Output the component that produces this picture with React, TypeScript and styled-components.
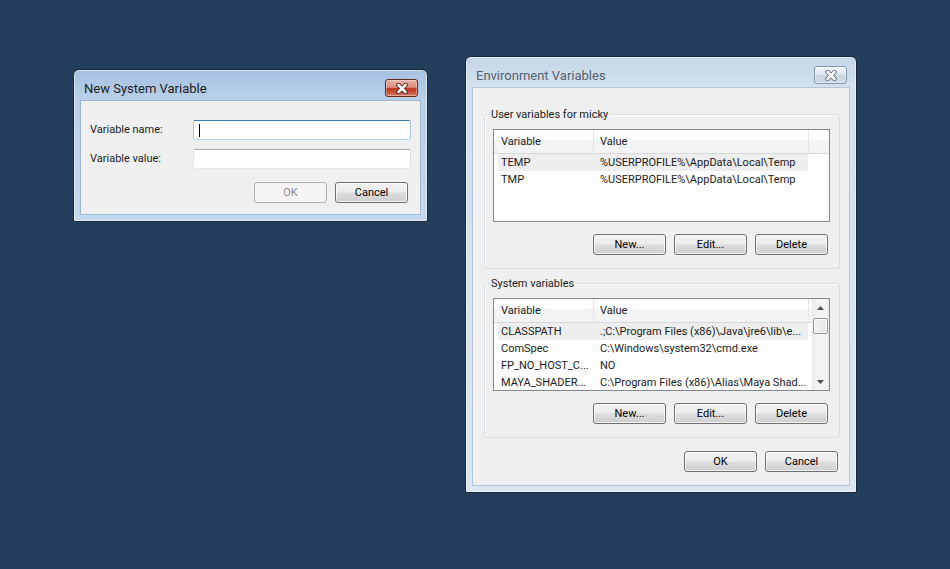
import React, { ReactElement } from 'react';
import styled, { createGlobalStyle } from 'styled-components';

interface WindowProps {
  $x: number;
  $y: number;
  $w: number;
  $h: number;
  $active?: boolean;
}

interface ActiveProps {
  $active?: boolean;
}

const GlobalStyle = createGlobalStyle`
  html, body {
    margin: 0;
    padding: 0;
  }
  body {
    background: #243f5c;
    font-family: Roboto, 'Noto Sans', sans-serif;
    font-size: 11px;
    color: #1b1b1b;
  }
`;

const Desktop = styled.div`
  position: relative;
  width: 950px;
  height: 569px;
  overflow: hidden;
  background: #243f5c;
`;

const Window = styled.div<WindowProps>`
  position: absolute;
  left: ${({ $x }) => $x}px;
  top: ${({ $y }) => $y}px;
  width: ${({ $w }) => $w}px;
  height: ${({ $h }) => $h}px;
  box-sizing: border-box;
  display: flex;
  flex-direction: column;
  padding: 0 6px 6px;
  border: 1px solid #1a2939;
  border-radius: 6px 6px 2px 2px;
  background: ${({ $active }) =>
    $active
      ? 'linear-gradient(180deg, #a6c1df 0px, #b8d0e9 28px, #c4d9ee 100%)'
      : 'linear-gradient(180deg, #c6d6e8 0px, #d2e0ef 28px, #dae6f2 100%)'};
  box-shadow: inset 0 0 0 1px rgba(255, 255, 255, 0.5);
`;

const TitleBar = styled.div`
  height: 30px;
  display: flex;
  align-items: flex-start;
  justify-content: space-between;
  padding: 0 3px 0 4px;
  flex-shrink: 0;
`;

const Title = styled.span<ActiveProps>`
  margin-top: 10px;
  font-size: 13px;
  line-height: 17px;
  color: ${({ $active }) => ($active ? '#1c1c1c' : '#55616d')};
`;

const CloseButton = styled.div<ActiveProps>`
  margin-top: 9px;
  width: 33px;
  height: 18px;
  box-sizing: border-box;
  border-radius: 3px;
  display: flex;
  align-items: center;
  justify-content: center;
  border: 1px solid ${({ $active }) => ($active ? '#6a2518' : '#8797ab')};
  background: ${({ $active }) =>
    $active
      ? 'linear-gradient(180deg, #eab3a8 0%, #db8b7c 46%, #c23a21 52%, #c84b33 75%, #dc846f 100%)'
      : 'linear-gradient(180deg, #eef3f8 0%, #dfe7f0 46%, #cbd7e4 52%, #cfdae6 100%)'};
  box-shadow: inset 0 0 0 1px rgba(255, 255, 255, 0.35);
`;

const Client = styled.div<ActiveProps>`
  flex: 1;
  box-sizing: border-box;
  display: flex;
  flex-direction: column;
  background: #f0f0f0;
  border: 1px solid ${({ $active }) => ($active ? '#9fb6cf' : '#b5c6d8')};
`;

const FormClient = styled(Client)`
  padding: 19px 9px 0 9px;
`;

const FormGrid = styled.div`
  display: grid;
  grid-template-columns: 103px 1fr;
  align-items: center;
  row-gap: 9px;
`;

const FieldLabel = styled.span`
  line-height: 20px;
`;

const TextBox = styled.div<{ $focused?: boolean }>`
  height: 20px;
  box-sizing: border-box;
  display: flex;
  align-items: center;
  padding-left: 5px;
  background: #fff;
  border: 1px solid;
  border-radius: 2px;
  border-color: ${({ $focused }) =>
    $focused
      ? '#3d7bad #a4c9e3 #b7d9ed #a4c9e3'
      : '#abadb3 #dbdfe6 #e3e9ef #e2e3ea'};
`;

const Caret = styled.span`
  width: 1px;
  height: 13px;
  background: #000;
`;

const ButtonRow = styled.div<{ $top: number; $right: number }>`
  display: flex;
  justify-content: flex-end;
  gap: 8px;
  margin-top: ${({ $top }) => $top}px;
  padding-right: ${({ $right }) => $right}px;
`;

const Button = styled.button`
  width: 73px;
  height: 21px;
  box-sizing: border-box;
  padding: 0;
  font-family: Roboto, 'Noto Sans', sans-serif;
  font-size: 11px;
  color: #000;
  border: 1px solid #707070;
  border-radius: 3px;
  background: linear-gradient(180deg, #f3f3f3 0%, #ececec 48%, #dddddd 52%, #cfcfcf 100%);
  box-shadow: inset 0 0 0 1px rgba(255, 255, 255, 0.75);

  &:disabled {
    color: #8a8a8a;
    border-color: #adb2b5;
    background: #f4f4f4;
    box-shadow: none;
  }
`;

const EnvClient = styled(Client)`
  padding: 26px 9px 0 11px;
`;

const GroupBox = styled.section<{ $gap?: number }>`
  position: relative;
  margin-top: ${({ $gap = 0 }) => $gap}px;
  padding: 14px 9px 13px 8px;
  border: 1px solid #d5dfe5;
  border-radius: 3px;
  box-shadow: inset 1px 1px 0 #fff;
`;

const GroupLabel = styled.span`
  position: absolute;
  top: -8px;
  left: 5px;
  padding: 0 1px;
  line-height: 15px;
  background: #f0f0f0;
  color: #1b1b1b;
`;

const ListView = styled.div`
  display: flex;
  height: 93px;
  box-sizing: border-box;
  border: 1px solid #828790;
  background: #fff;
  overflow: hidden;
`;

const ListBody = styled.div`
  flex: 1;
  min-width: 0;
`;

const HeaderRow = styled.div`
  display: grid;
  grid-template-columns: 100px 215px 1fr;
  height: 24px;
  box-sizing: border-box;
  border-bottom: 1px solid #d8d8d8;
  background: linear-gradient(180deg, #ffffff 0%, #ffffff 40%, #f4f5f7 45%, #f2f3f5 100%);
`;

const HeaderCell = styled.div<{ $pad: number; $last?: boolean }>`
  display: flex;
  align-items: center;
  padding-left: ${({ $pad }) => $pad}px;
  border-right: ${({ $last }) => ($last ? 'none' : '1px solid #e3e4e6')};
  color: #1b1b1b;
`;

const Row = styled.div<{ $selected?: boolean }>`
  display: grid;
  grid-template-columns: 96px 214px;
  margin-left: 4px;
  width: 310px;
  height: 17px;
  line-height: 17px;
  background: ${({ $selected }) => ($selected ? '#eeeeee' : 'transparent')};
  color: #1b1b1b;
`;

const Cell = styled.span<{ $pad: number }>`
  padding-left: ${({ $pad }) => $pad}px;
  white-space: nowrap;
  overflow: hidden;
`;

const ScrollBar = styled.div`
  width: 17px;
  flex-shrink: 0;
  display: flex;
  flex-direction: column;
  background: linear-gradient(90deg, #e9e9e9 0%, #f4f4f4 30%, #f4f4f4 70%, #ececec 100%);
`;

const ScrollArrow = styled.div`
  height: 17px;
  display: flex;
  align-items: center;
  justify-content: center;
`;

const ScrollThumb = styled.div`
  height: 16px;
  margin: 2px 1px 0;
  box-sizing: border-box;
  border: 1px solid #979797;
  border-radius: 2px;
  background: linear-gradient(90deg, #f2f2f2 0%, #e6e6e6 100%);
  box-shadow: inset 0 0 0 1px rgba(255, 255, 255, 0.8);
`;

const ScrollTrack = styled.div`
  flex: 1;
`;

const CloseGlyph = ({ active }: { active?: boolean }): ReactElement => (
  <svg width="14" height="11" viewBox="0 0 14 11">
    <path
      d="M3.5 2 L10.5 9 M10.5 2 L3.5 9"
      stroke={active ? '#4a1a12' : '#5d6b7a'}
      strokeWidth="4.4"
      strokeLinecap="round"
      fill="none"
    />
    <path
      d="M3.5 2 L10.5 9 M10.5 2 L3.5 9"
      stroke="#ffffff"
      strokeWidth="2.6"
      strokeLinecap="round"
      fill="none"
    />
  </svg>
);

const Arrow = ({ down }: { down?: boolean }): ReactElement => (
  <svg width="7" height="4" viewBox="0 0 7 4">
    <path d={down ? 'M0 0 L7 0 L3.5 4 Z' : 'M0 4 L7 4 L3.5 0 Z'} fill="#4d4d4d" />
  </svg>
);

type VarRow = { name: string; value: string; selected?: boolean };

const userVars: VarRow[] = [
  { name: 'TEMP', value: '%USERPROFILE%\\AppData\\Local\\Temp', selected: true },
  { name: 'TMP', value: '%USERPROFILE%\\AppData\\Local\\Temp' },
];

const systemVars: VarRow[] = [
  { name: 'CLASSPATH', value: '.;C:\\Program Files (x86)\\Java\\jre6\\lib\\e...', selected: true },
  { name: 'ComSpec', value: 'C:\\Windows\\system32\\cmd.exe' },
  { name: 'FP_NO_HOST_C...', value: 'NO' },
  { name: 'MAYA_SHADER...', value: 'C:\\Program Files (x86)\\Alias\\Maya Shad...' },
];

const VariableList = ({ rows, scroll }: { rows: VarRow[]; scroll?: boolean }): ReactElement => (
  <ListView>
    <ListBody>
      <HeaderRow>
        <HeaderCell $pad={7}>Variable</HeaderCell>
        <HeaderCell $pad={6}>Value</HeaderCell>
        <HeaderCell $pad={0} $last />
      </HeaderRow>
      {rows.map((r) => (
        <Row key={r.name} $selected={r.selected}>
          <Cell $pad={3}>{r.name}</Cell>
          <Cell $pad={6}>{r.value}</Cell>
        </Row>
      ))}
    </ListBody>
    {scroll && (
      <ScrollBar>
        <ScrollArrow>
          <Arrow />
        </ScrollArrow>
        <ScrollThumb />
        <ScrollTrack />
        <ScrollArrow>
          <Arrow down />
        </ScrollArrow>
      </ScrollBar>
    )}
  </ListView>
);

const App = (): ReactElement => (
  <Desktop>
    <GlobalStyle />
    <Window $x={73} $y={69} $w={355} $h={153} $active>
      <TitleBar>
        <Title $active>New System Variable</Title>
        <CloseButton $active>
          <CloseGlyph active />
        </CloseButton>
      </TitleBar>
      <FormClient $active>
        <FormGrid>
          <FieldLabel>Variable name:</FieldLabel>
          <TextBox $focused>
            <Caret />
          </TextBox>
          <FieldLabel>Variable value:</FieldLabel>
          <TextBox />
        </FormGrid>
        <ButtonRow $top={13} $right={3}>
          <Button disabled>OK</Button>
          <Button>Cancel</Button>
        </ButtonRow>
      </FormClient>
    </Window>

    <Window $x={465} $y={56} $w={392} $h={437}>
      <TitleBar>
        <Title>Environment Variables</Title>
        <CloseButton>
          <CloseGlyph />
        </CloseButton>
      </TitleBar>
      <EnvClient>
        <GroupBox>
          <GroupLabel>User variables for micky</GroupLabel>
          <VariableList rows={userVars} />
          <ButtonRow $top={12} $right={2}>
            <Button>New...</Button>
            <Button>Edit...</Button>
            <Button>Delete</Button>
          </ButtonRow>
        </GroupBox>
        <GroupBox $gap={14}>
          <GroupLabel>System variables</GroupLabel>
          <VariableList rows={systemVars} scroll />
          <ButtonRow $top={12} $right={2}>
            <Button>New...</Button>
            <Button>Edit...</Button>
            <Button>Delete</Button>
          </ButtonRow>
        </GroupBox>
        <ButtonRow $top={13} $right={2}>
          <Button>OK</Button>
          <Button>Cancel</Button>
        </ButtonRow>
      </EnvClient>
    </Window>
  </Desktop>
);

export default App;
